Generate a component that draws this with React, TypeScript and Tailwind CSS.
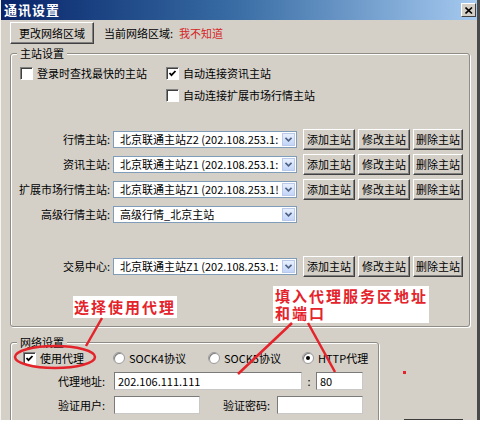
import React from "react";

const FONT = "font-['Noto_Sans_CJK_SC',sans-serif]";

function Btn({ w, children }: { w: string; children: React.ReactNode }) {
  return (
    <div
      className={`${w} h-[21px] flex items-center justify-center bg-[#d4d0c8] text-[11px] text-black border border-t-white border-l-white border-r-[#404040] border-b-[#404040] shadow-[inset_-1px_-1px_0_#808080]`}
    >
      {children}
    </div>
  );
}

function CheckBox({ checked }: { checked?: boolean }) {
  return (
    <div className="w-[13px] h-[13px] bg-white border border-t-[#808080] border-l-[#808080] border-r-white border-b-white shadow-[inset_1px_1px_0_#404040] flex items-center justify-center shrink-0">
      {checked && (
        <svg width="9" height="9" viewBox="0 0 9 9">
          <polyline points="1.5,4 3.5,6.2 7.5,2" fill="none" stroke="#000" strokeWidth="1.8" />
        </svg>
      )}
    </div>
  );
}

function Radio({ checked }: { checked?: boolean }) {
  return (
    <div className="w-[12px] h-[12px] rounded-full bg-white border border-[#9a9a9a] shadow-[inset_1px_1px_0_#808080] flex items-center justify-center shrink-0">
      {checked && <div className="w-[4px] h-[4px] rounded-full bg-black" />}
    </div>
  );
}

function Select({ text }: { text: string }) {
  return (
    <div className="ml-[3px] w-[184px] h-[17px] bg-white border border-[#7f9db9] flex items-stretch">
      <span className="flex-1 pl-[6px] text-[11px] leading-[15px] whitespace-nowrap overflow-hidden text-black">{text}</span>
      <div className="w-[13px] m-[1px] bg-linear-to-b from-[#e8f0fd] to-[#c3d4f7] border border-[#b9c9ec] flex items-center justify-center">
        <svg width="7" height="5" viewBox="0 0 7 5">
          <polyline points="0.5,0.8 3.5,3.8 6.5,0.8" fill="none" stroke="#4d6185" strokeWidth="1.6" />
        </svg>
      </div>
    </div>
  );
}

function Input({ w, value }: { w: string; value?: string }) {
  return (
    <div className={`${w} h-[18px] bg-white border border-t-[#7a7a7a] border-l-[#7a7a7a] border-r-[#c8c8c8] border-b-[#c8c8c8] text-[11px] leading-[16px] pl-[3px] text-black`}>
      {value}
    </div>
  );
}

function StationRow({ label, value, buttons = true, mb = "mb-[4px]" }: { label: string; value: string; buttons?: boolean; mb?: string }) {
  return (
    <div className={`flex items-center h-[21px] ${mb}`}>
      <span className="w-[99px] text-right text-[11px] whitespace-nowrap">{label}</span>
      <Select text={value} />
      {buttons && (
        <div className="ml-[6px] flex gap-[3px]">
          <Btn w="w-[52px]">添加主站</Btn>
          <Btn w="w-[52px]">修改主站</Btn>
          <Btn w="w-[50px]">删除主站</Btn>
        </div>
      )}
    </div>
  );
}

function Legend({ children }: { children: React.ReactNode }) {
  return (
    <span className="absolute left-[6px] top-[-8px] px-[3px] bg-[#d4d0c8] text-[11px] leading-[14px] text-black">{children}</span>
  );
}

export default function App() {
  return (
    <div className={`relative w-[480px] h-[437px] bg-white overflow-hidden ${FONT} text-black`}>
      <div className="w-[480px] h-[420px] bg-[#d4d0c8] border-l border-l-[#f4f3ee] border-r-[3px] border-r-[#4a4a4a] overflow-hidden flex flex-col">
        {/* title bar */}
        <div className="h-[20px] shrink-0 bg-linear-to-r from-[#0a246a] via-[#3a6ea5] to-[#a6caf0] flex items-center justify-between pl-[3px] pr-[1px]">
          <span className="text-white text-[13px] font-bold leading-[20px] tracking-[1px]">通讯设置</span>
          <div className="w-[15px] h-[14px] bg-[#d4d0c8] border border-t-white border-l-white border-r-[#404040] border-b-[#404040] flex items-center justify-center">
            <svg width="8" height="7" viewBox="0 0 8 7">
              <path d="M0.5 0.5 L7 6.5 M7 0.5 L0.5 6.5" stroke="#000" strokeWidth="1.6" />
            </svg>
          </div>
        </div>

        {/* top row */}
        <div className="flex items-center pl-[9px] pt-[2px]">
          <Btn w="w-[84px] h-[22px]">更改网络区域</Btn>
          <span className="ml-[10px] text-[11px]">当前网络区域:</span>
          <span className="ml-[6px] text-[11px] text-[#d42626]">我不知道</span>
        </div>

        {/* 主站设置 */}
        <div className="relative mt-[9px] ml-[9px] w-[460px] h-[274px] shrink-0 border border-[#8f8c85] rounded-[3px] shadow-[inset_1px_1px_0_#fff,1px_1px_0_#fff]">
          <Legend>主站设置</Legend>
          <div className="pl-[9px] pt-[11px]">
            <div className="flex items-center h-[16px] text-[11px]">
              <div className="w-[146px] flex items-center gap-[4px]">
                <CheckBox />
                <span>登录时查找最快的主站</span>
              </div>
              <div className="flex items-center gap-[4px]">
                <CheckBox checked />
                <span>自动连接资讯主站</span>
              </div>
            </div>
            <div className="flex items-center h-[16px] mt-[6px] ml-[146px] gap-[4px] text-[11px]">
              <CheckBox />
              <span>自动连接扩展市场行情主站</span>
            </div>
          </div>
          <div className="mt-[26px]">
            <StationRow label="行情主站:" value="北京联通主站Z2 (202.108.253.1:" />
            <StationRow label="资讯主站:" value="北京联通主站Z1 (202.108.253.1:" />
            <StationRow label="扩展市场行情主站:" value="北京联通主站Z1 (202.108.253.1!" />
            <StationRow label="高级行情主站:" value="高级行情_北京主站" buttons={false} mb="mb-[31px]" />
            <StationRow label="交易中心:" value="北京联通主站Z1 (202.108.253.1:" />
          </div>
        </div>

        {/* bottom row */}
        <div className="flex mt-[15px] ml-[9px]">
          <div className="relative w-[369px] h-[100px] shrink-0 border border-[#8f8c85] rounded-[3px] shadow-[inset_1px_1px_0_#fff,1px_1px_0_#fff]">
            <Legend>网络设置</Legend>
            <div className="pt-[7px] pl-[12px] flex items-center h-[23px] text-[11px]">
              <div className="w-[90px] flex items-center gap-[4px]">
                <CheckBox checked />
                <span>使用代理</span>
              </div>
              <div className="w-[95px] flex items-center gap-[4px]">
                <Radio />
                <span>SOCK4协议</span>
              </div>
              <div className="w-[94px] flex items-center gap-[4px]">
                <Radio />
                <span>SOCK5协议</span>
              </div>
              <div className="flex items-center gap-[4px]">
                <Radio checked />
                <span>HTTP代理</span>
              </div>
            </div>
            <div className="mt-[6px] flex items-center text-[11px]">
              <span className="w-[94px] text-right">代理地址:</span>
              <div className="ml-[9px]">
                <Input w="w-[188px]" value="202.106.111.111" />
              </div>
              <span className="w-[14px] text-center">:</span>
              <Input w="w-[47px]" value="80" />
            </div>
            <div className="mt-[6px] flex items-center text-[11px]">
              <span className="w-[94px] text-right">验证用户:</span>
              <div className="ml-[9px]">
                <Input w="w-[86px]" />
              </div>
              <span className="w-[70px] text-right">验证密码:</span>
              <div className="ml-[7px]">
                <Input w="w-[86px]" />
              </div>
            </div>
          </div>
          <div className="ml-[25px] mt-[77px] w-[59px] h-[22px] shrink-0 border-t-2 border-t-[#3c3c3c]" />
        </div>
      </div>

      {/* annotations */}
      <div className="absolute left-[73px] top-[296px] w-[104px] h-[22px] bg-white flex items-center justify-center">
        <span className="text-[#e4232b] text-[15px] font-bold tracking-[2px] leading-[20px]">选择使用代理</span>
      </div>
      <div className="absolute left-[273px] top-[286px] w-[156px] h-[37px] bg-white pl-[2px] pt-[1px]">
        <div className="text-[#e4232b] text-[15px] font-bold tracking-[2px] leading-[17px] whitespace-nowrap">填入代理服务区地址</div>
        <div className="text-[#e4232b] text-[15px] font-bold tracking-[2px] leading-[17px]">和端口</div>
      </div>
      <svg className="absolute left-0 top-0 pointer-events-none" width="480" height="437" viewBox="0 0 480 437">
        <line x1="102" y1="318" x2="86" y2="346" stroke="#e4232b" strokeWidth="2.5" />
        <ellipse cx="55" cy="357" rx="40" ry="11" fill="none" stroke="#e4232b" strokeWidth="2.5" />
        <line x1="292" y1="323" x2="238" y2="374" stroke="#e4232b" strokeWidth="2.5" />
        <line x1="308" y1="323" x2="335" y2="372" stroke="#e4232b" strokeWidth="2.5" />
        <rect x="403" y="371" width="3" height="3" fill="#e4232b" />
      </svg>
    </div>
  );
}
